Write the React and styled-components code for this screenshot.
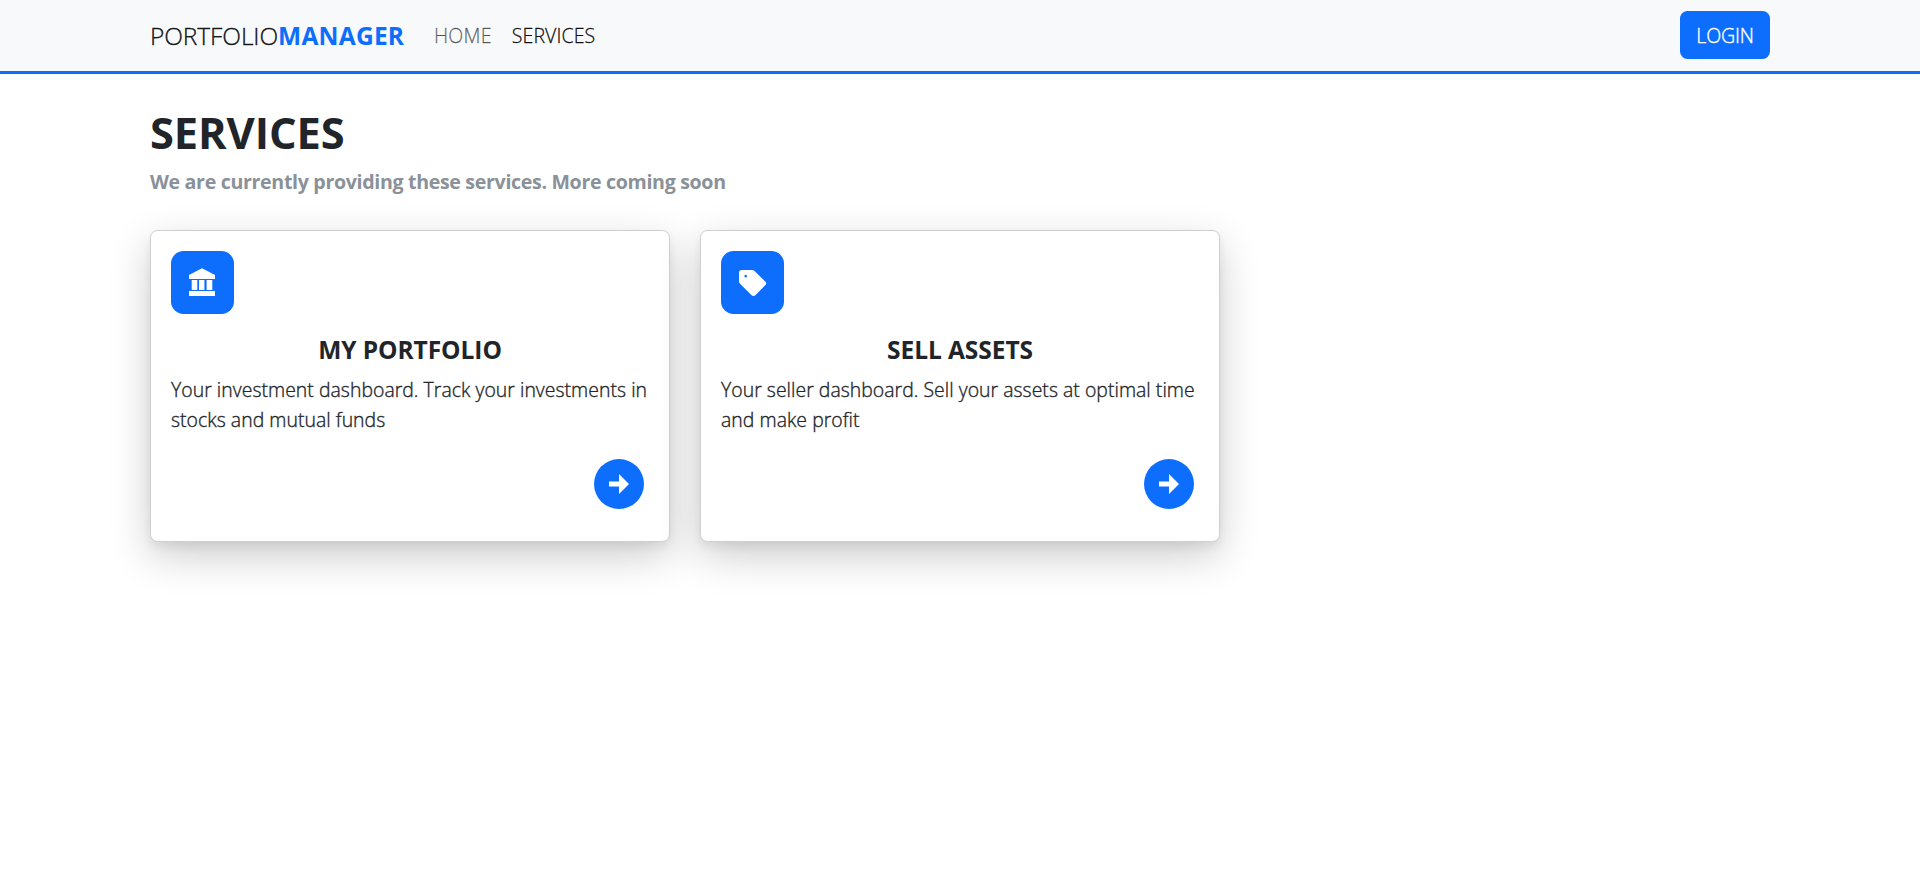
import React from 'react';
import styled, { createGlobalStyle } from 'styled-components';

const BLUE = '#0d6efd';

const GlobalStyle = createGlobalStyle`
  *, *::before, *::after { box-sizing: border-box; }
  body {
    margin: 0;
    min-height: 100vh;
    background: #fff;
    color: #212529;
    font-family: 'Open Sans', 'Noto Sans', sans-serif;
    font-size: 19.4px;
    font-weight: 300;
    line-height: 30px;
  }
  h1, h2, p { margin: 0; }
`;

const Page = styled.div`
  min-height: 100vh;
`;

const Container = styled.div`
  width: 1620px;
  margin: 0 auto;
`;

const Navbar = styled.nav`
  background: #f8f9fa;
  border-bottom: 3px solid ${BLUE};
`;

const NavRow = styled(Container)`
  display: flex;
  align-items: center;
  height: 71px;
  padding-bottom: 1px;
`;

const Brand = styled.a`
  width: 254px;
  margin-right: 30px;
  padding-top: 1px;
  font-size: 24.5px;
  letter-spacing: -0.1px;
  color: rgba(0, 0, 0, 0.9);
  white-space: nowrap;
  -webkit-text-stroke: 0.35px currentColor;
`;

const BrandAccent = styled.span`
  font-weight: 700;
  letter-spacing: 0.25px;
  color: ${BLUE};
  -webkit-text-stroke: 0;
`;

const NavLinks = styled.div`
  display: flex;
  flex: 1;
  gap: 20px;
  padding-top: 1px;
`;

const NavLink = styled.a`
  font-size: 19.6px;
  letter-spacing: ${(p) => (p.$active ? '0.05px' : '0.25px')};
  color: ${(p) => (p.$active ? 'rgba(0, 0, 0, 0.9)' : 'rgba(0, 0, 0, 0.55)')};
  -webkit-text-stroke: 0.3px currentColor;
`;

const LoginButton = styled.button`
  width: 90px;
  height: 48px;
  padding: 1px 0 0;
  border: 0;
  border-radius: 7.5px;
  background: ${BLUE};
  color: #fff;
  font: inherit;
  font-size: 19.6px;
  letter-spacing: -0.2px;
  -webkit-text-stroke: 0.35px currentColor;
`;

const Main = styled(Container)`
  padding-top: 33px;
`;

const PageTitle = styled.h1`
  font-size: 43.4px;
  font-weight: 700;
  line-height: 52px;
  letter-spacing: -0.1px;
`;

const Subtitle = styled.p`
  margin: 8px 0 33px;
  font-size: 19.6px;
  font-weight: 700;
  letter-spacing: -0.33px;
  color: #8a9198;
`;

const CardGrid = styled.div`
  display: grid;
  grid-template-columns: repeat(3, 520px);
  gap: 30px;
`;

const Card = styled.article`
  display: flex;
  flex-direction: column;
  padding: 20px 20px 32px;
  border: 1px solid #cfcfcf;
  border-radius: 7.5px;
  background: #fff;
  box-shadow: 0 5px 8px rgba(0, 0, 0, 0.06), 0 14px 40px rgba(0, 0, 0, 0.2);
`;

const IconTile = styled.div`
  width: 63px;
  height: 63px;
  border-radius: 12.5px;
  background: ${BLUE};
  color: #fff;
`;

const CardTitle = styled.h2`
  margin: 21px 0 10px;
  font-size: 24.5px;
  font-weight: 700;
  line-height: 30px;
  letter-spacing: -0.06px;
  text-align: center;
`;

const CardText = styled.p`
  letter-spacing: 0.04px;
  -webkit-text-stroke: 0.35px currentColor;
`;

const GoButton = styled.a`
  align-self: flex-end;
  width: 50px;
  height: 50px;
  margin: 24px 5px 0 0;
  border-radius: 50%;
  background: ${BLUE};
  color: #fff;
`;

const Glyph = styled.svg`
  display: block;
  fill: currentColor;
`;

const BankIcon = () => (
  <Glyph width="63" height="63" viewBox="0 0 63 63">
    <path d="M31 17.3 L44 24 V28 H18 V24 Z" />
    <path d="M20.7 29h5.6v10h-5.6zM28 29h5.4v10H28zM35.6 29h5.7v10h-5.7z" />
    <path d="M18 40h26v5H18z" />
  </Glyph>
);

const TagIcon = () => (
  <Glyph width="63" height="63" viewBox="0 0 63 63">
    <path
      fillRule="evenodd"
      d="M20.6 19 H31.2 Q32.5 19 33.5 20 L44.4 30.7 Q46 32.3 44.4 34 L34.4 44.2 Q32.5 45.8 30.6 44.2 L19 32.8 Q18 31.8 18 30.5 V21.6 Q18 19 20.6 19 Z M24.7 23.8 a1.3 1.3 0 1 0 .01 0 Z"
    />
  </Glyph>
);

const ArrowIcon = () => (
  <Glyph width="50" height="50" viewBox="0 0 50 50">
    <path d="M15 22.5 H25 V15 L35 25 L25 35 V27.5 H15 Z" />
  </Glyph>
);

const services = [
  {
    title: 'MY PORTFOLIO',
    text: 'Your investment dashboard. Track your investments in stocks and mutual funds',
    Icon: BankIcon,
  },
  {
    title: 'SELL ASSETS',
    text: 'Your seller dashboard. Sell your assets at optimal time and make profit',
    Icon: TagIcon,
  },
];

export default function App() {
  return (
    <Page>
      <GlobalStyle />
      <Navbar>
        <NavRow>
          <Brand>
            PORTFOLIO<BrandAccent>MANAGER</BrandAccent>
          </Brand>
          <NavLinks>
            <NavLink>HOME</NavLink>
            <NavLink $active>SERVICES</NavLink>
          </NavLinks>
          <LoginButton>LOGIN</LoginButton>
        </NavRow>
      </Navbar>
      <Main as="main">
        <PageTitle>SERVICES</PageTitle>
        <Subtitle>We are currently providing these services. More coming soon</Subtitle>
        <CardGrid>
          {services.map(({ title, text, Icon }) => (
            <Card key={title}>
              <IconTile>
                <Icon />
              </IconTile>
              <CardTitle>{title}</CardTitle>
              <CardText>{text}</CardText>
              <GoButton>
                <ArrowIcon />
              </GoButton>
            </Card>
          ))}
        </CardGrid>
      </Main>
    </Page>
  );
}
